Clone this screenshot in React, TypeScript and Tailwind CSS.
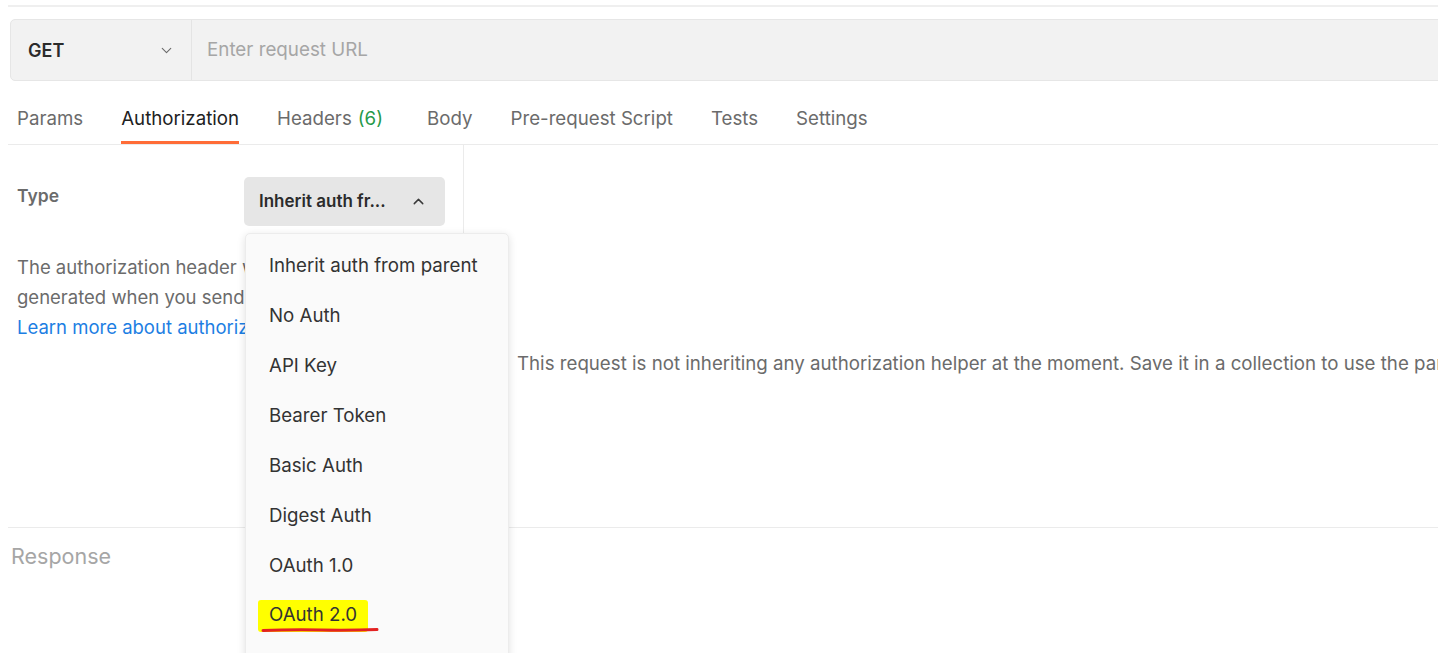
import { ChevronDown, ChevronUp } from "lucide-react";

const tabs = [
  { label: "Params" },
  { label: "Authorization", active: true },
  { label: "Headers", count: "(6)" },
  { label: "Body" },
  { label: "Pre-request Script" },
  { label: "Tests" },
  { label: "Settings" },
];

const authTypes = [
  "Inherit auth from parent",
  "No Auth",
  "API Key",
  "Bearer Token",
  "Basic Auth",
  "Digest Auth",
  "OAuth 1.0",
];

const App = () => {
  return (
    <div className="h-[653px] w-full overflow-hidden bg-white font-['Inter',sans-serif] text-[#212121]">
      {/* top separator */}
      <div className="ml-[8px] mt-[5px] h-[2px] bg-[#efefef]" />

      {/* url bar */}
      <div className="ml-[10px] mr-[-12px] mt-[12px] flex h-[62px] rounded-l-[5px] border border-[#e6e6e6] bg-[#f2f2f2]">
        <div className="flex w-[181px] items-center justify-between border-r border-[#e4e4e4] pl-[17px] pr-[16px]">
          <span className="text-[18px] font-semibold text-[#2b2b2b]">GET</span>
          <ChevronDown className="h-[17px] w-[17px] text-[#6b6b6b]" strokeWidth={1.6} />
        </div>
        <div className="flex items-center pl-[15px] text-[18.8px] text-[#a6a6a6]">
          Enter request URL
        </div>
      </div>

      {/* tabs */}
      <div className="ml-[8px] mt-[1px] flex h-[63px] gap-[38px] border-b border-[#ebebeb] pl-[9px]">
        {tabs.map((t) => (
          <div
            key={t.label}
            className={`flex items-center border-b-[3px] pt-[16px] text-[18.7px] ${
              t.active
                ? "border-[#ff6c37] text-[#212121]"
                : "border-transparent text-[#6b6b6b]"
            } ${t.count ? "mr-[6px]" : ""}`}
          >
            {t.label}
            {t.count && <span className="ml-[6px] text-[#26994a]">{t.count}</span>}
          </div>
        ))}
      </div>

      {/* auth body */}
      <div className="ml-[8px] flex h-[383px] border-b border-[#ebebeb]">
        <div className="w-[456px] shrink-0 border-r border-[#ebebeb] pl-[9px] pr-[12px]">
          <div className="mt-[32px] flex items-start">
            <span className="mt-[6px] w-[227px] text-[17.5px] font-semibold text-[#6b6b6b]">Type</span>
            <div className="relative">
              <div className="flex h-[49px] w-[201px] items-center justify-between rounded-[5px] bg-[#e6e6e6] pl-[15px] pr-[18px]">
                <span className="text-[17px] font-semibold text-[#2b2b2b]">Inherit auth fr...</span>
                <ChevronUp className="h-[17px] w-[17px] text-[#3a3a3a]" strokeWidth={2} />
              </div>

              {/* menu */}
              <div className="absolute left-[1px] top-[56px] z-10 h-[460px] w-[264px] rounded-[5px] border border-[#ececec] bg-[#fafafa] pt-[7px] shadow-[0_2px_8px_rgba(0,0,0,0.12)]">
                {authTypes.map((a) => (
                  <div key={a} className="flex h-[50px] items-center pl-[23px] text-[18.7px] text-[#333333]">
                    {a}
                  </div>
                ))}
                <div className="flex h-[50px] items-center pl-[12px]">
                  <span className="relative rounded-[3px] bg-[#ffff00] px-[11px] pb-[2px] pt-[1px] text-[18.7px] text-[#333333]">
                    OAuth 2.0
                    <svg
                      className="absolute left-[3px] top-[27px]"
                      width="118"
                      height="6"
                      viewBox="0 0 118 6"
                    >
                      <path
                        d="M2 3.5 Q 30 2.5 60 3 T 116 2.5"
                        stroke="#e32222"
                        strokeWidth="3"
                        strokeLinecap="round"
                        fill="none"
                      />
                    </svg>
                  </span>
                </div>
              </div>
            </div>
          </div>

          <p className="mt-[26px] whitespace-nowrap text-[18.5px] leading-[30px] text-[#6b6b6b]">
            <span className="block">The authorization header will be automatically</span>
            <span className="block">generated when you send the request.</span>
            <span className="block text-[#1c7ee3]">Learn more about authorization</span>
          </p>
        </div>

        <div className="flex min-w-0 flex-1 items-start pl-[53px] pt-[205px]">
          <p className="whitespace-nowrap text-[18.7px] text-[#6b6b6b]">
            This request is not inheriting any authorization helper at the moment. Save it in a
            collection to use the parent's authorization helper.
          </p>
        </div>
      </div>

      {/* response */}
      <div className="pl-[11px] pt-[12px] text-[21.5px] text-[#a6a6a6]">Response</div>
    </div>
  );
};

export default App;
